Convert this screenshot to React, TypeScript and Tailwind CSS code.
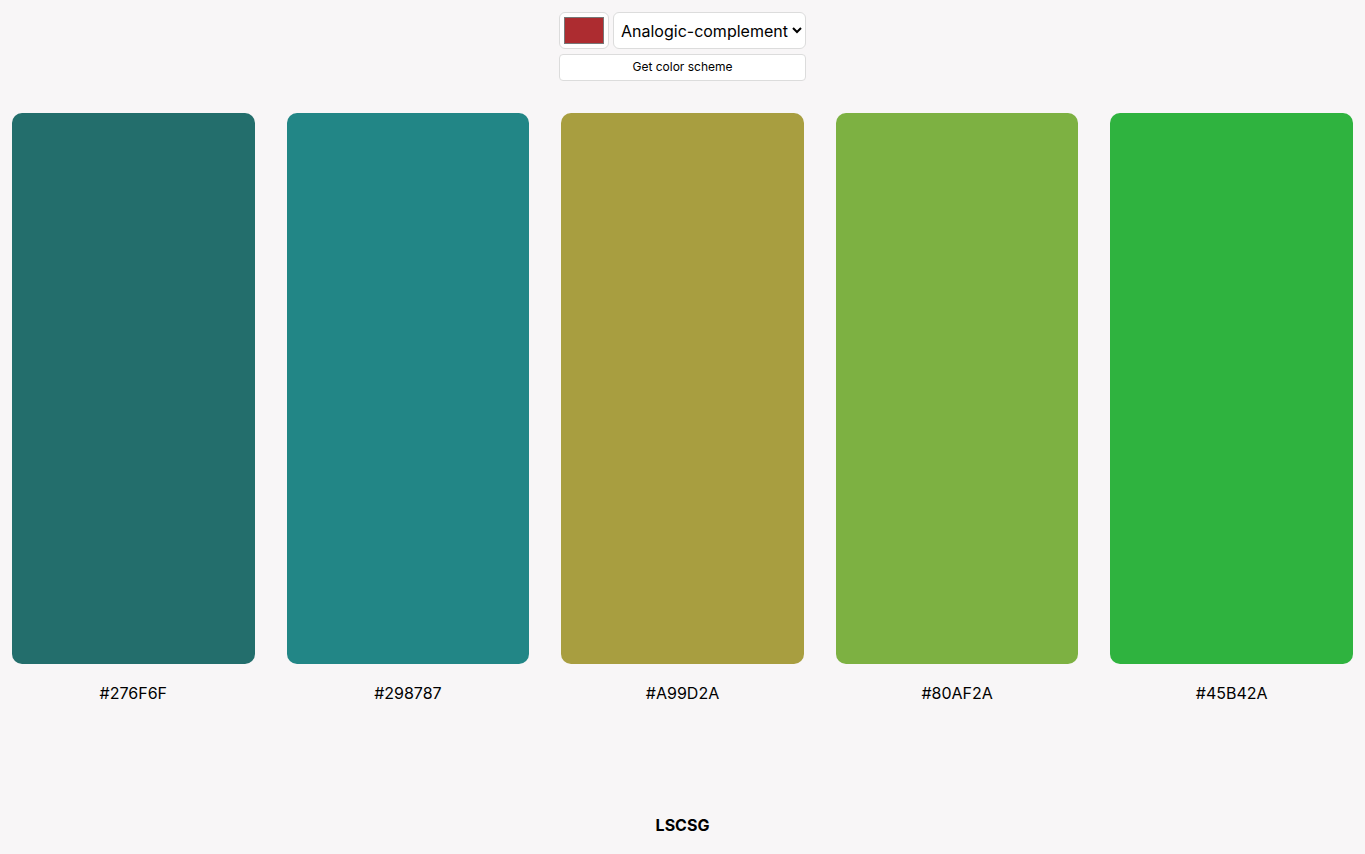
import { useState } from "react";

const SCHEME = [
  { hex: "#276F6F", shown: "#236e6c" },
  { hex: "#298787", shown: "#228686" },
  { hex: "#A99D2A", shown: "#a89e40" },
  { hex: "#80AF2A", shown: "#7db142" },
  { hex: "#45B42A", shown: "#2fb33f" },
];

const App = () => {
  const [mode, setMode] = useState("analogic-complement");

  return (
    <div className="min-h-screen bg-[#f8f6f7] font-['Inter',sans-serif] text-black flex flex-col">
      {/* Controls */}
      <div className="pt-3 flex flex-col items-center gap-[5px]">
        <div className="flex gap-1 w-[247px]">
          <div className="w-[50px] h-[37px] bg-white border border-[#dcdcdc] rounded-md flex items-center justify-center shrink-0">
            <div className="w-[40px] h-[27px] bg-[#ad2c30] border border-[#777]" />
          </div>
          <select
            value={mode}
            onChange={(e) => setMode(e.target.value)}
            className="w-[193px] min-w-0 h-[37px] bg-white border border-[#dcdcdc] rounded-md pl-[3px] text-[16px] text-black"
          >
            <option value="monochrome">Monochrome</option>
            <option value="analogic-complement">Analogic-complement</option>
            <option value="triad">Triad</option>
          </select>
        </div>
        <button className="w-[247px] h-[27px] bg-white border border-[#dcdcdc] rounded text-[12px] leading-4 pb-px">
          Get color scheme
        </button>
      </div>

      {/* Palette */}
      <div className="grid grid-cols-5 gap-8 px-3 mt-8">
        {SCHEME.map((c) => (
          <div key={c.hex} className="flex flex-col items-center">
            <div className="w-full h-[551px] rounded-[10px]" style={{ backgroundColor: c.shown }} />
            <p className="mt-[19px] text-[16px] leading-5">{c.hex}</p>
          </div>
        ))}
      </div>

      <footer className="mt-[112px] text-center font-bold text-[16px] leading-5">LSCSG</footer>
    </div>
  );
};

export default App;
